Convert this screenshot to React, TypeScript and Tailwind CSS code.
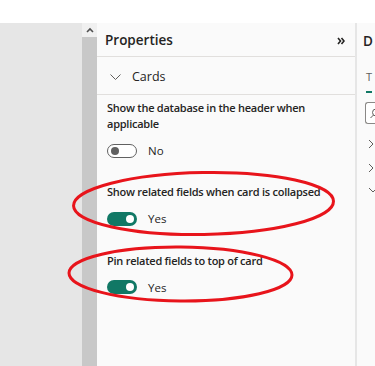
import React from 'react';

const font = { fontFamily: '"Open Sans", "Noto Sans", sans-serif' };

type ToggleRowProps = {
  label: React.ReactNode;
  on: boolean;
};

const Toggle: React.FC<{ on: boolean }> = ({ on }) =>
  on ? (
    <div className="flex h-[14px] w-[30px] items-center justify-end rounded-full bg-[#117865] pr-[3px]">
      <div className="size-[8px] rounded-full bg-white" />
    </div>
  ) : (
    <div className="flex h-[14px] w-[30px] items-center rounded-full border border-[#616161] bg-white pl-[3px]">
      <div className="size-[8px] rounded-full bg-[#616161]" />
    </div>
  );

const ToggleRow: React.FC<ToggleRowProps> = ({ label, on }) => (
  <div className="flex flex-col">
    <div className="text-[11px] font-semibold leading-[16px] tracking-[-0.25px] text-[#252423]">{label}</div>
    <div className="mt-[10px] flex items-center gap-[11px]">
      <Toggle on={on} />
      <span className="text-[11.5px] text-[#252423]">{on ? 'Yes' : 'No'}</span>
    </div>
  </div>
);

export default function App() {
  return (
    <div className="relative flex h-[366px] w-[375px] flex-col overflow-hidden bg-white" style={font}>
      <div className="h-[23px] shrink-0 bg-white shadow-[0_1px_2px_rgba(0,0,0,0.08)]" />

      <div className="flex flex-1">
        {/* canvas */}
        <div className="w-[82px] shrink-0 bg-[#e6e6e6]" />

        {/* scrollbar */}
        <div className="flex w-[15px] shrink-0 flex-col bg-[#f0f0f0]">
          <div className="flex h-[14px] items-center justify-center">
            <svg width="8" height="6" viewBox="0 0 8 6">
              <path d="M1 5 L4 2 L7 5" fill="none" stroke="#505050" strokeWidth="1.6" />
            </svg>
          </div>
          <div className="flex-1 bg-[#c8c8c8]" />
        </div>

        {/* properties pane */}
        <div className="flex w-[260px] shrink-0 flex-col border-r-2 border-[#e6e6e6] bg-[#fafafa]">
          <div className="flex h-[34px] items-center justify-between border-b border-[#e1dfdd] pl-[8px] pr-[10px] pt-[2px]">
            <span className="text-[13.5px] font-semibold text-[#252423]">Properties</span>
            <svg width="8" height="8" viewBox="0 0 8 8">
              <path d="M1 1 L3.5 4 L1 7 M4.5 1 L7 4 L4.5 7" fill="none" stroke="#252423" strokeWidth="1.6" />
            </svg>
          </div>

          <div className="flex h-[38px] items-center gap-[11px] border-b border-[#e1dfdd] pl-[13px] pt-[3px]">
            <svg width="11" height="7" viewBox="0 0 11 7">
              <path d="M0.5 0.5 L5.5 5.5 L10.5 0.5" fill="none" stroke="#605e5c" strokeWidth="1" />
            </svg>
            <span className="text-[12.5px] text-[#252423]">Cards</span>
          </div>

          <div className="flex flex-col gap-[25px] pl-[10px] pr-[12px] pt-[5px]">
            <ToggleRow
              on={false}
              label={
                <>
                  Show the database in the header when
                  <br />
                  applicable
                </>
              }
            />
            <ToggleRow on label="Show related fields when card is collapsed" />
            <ToggleRow on label="Pin related fields to top of card" />
          </div>
        </div>

        {/* next pane, cut off */}
        <div className="flex flex-1 flex-col bg-[#fafafa] pl-[6px]">
          <div className="flex h-[34px] items-center pt-[2px]">
            <span className="text-[13.5px] font-semibold text-[#252423]">D</span>
          </div>
          <div className="mt-[14px] flex flex-col items-start pl-[3px]">
            <span className="text-[11px] leading-[12px] text-[#605e5c]">T</span>
            <div className="mt-[8px] h-[2px] w-[6px] bg-[#117865]" />
          </div>
          <div className="ml-[2px] mt-[9px] flex h-[22px] w-[20px] items-center rounded-l-[3px] border border-r-0 border-[#8a8886] bg-white pl-[4px]">
            <svg width="10" height="10" viewBox="0 0 10 10">
              <circle cx="6" cy="4.5" r="3.5" fill="none" stroke="#605e5c" strokeWidth="1" />
              <path d="M3.5 7 L0.5 10" stroke="#605e5c" strokeWidth="1" />
            </svg>
          </div>
          <div className="mt-[15px] flex flex-col gap-[14px] pl-[5px]">
            <svg width="6" height="10" viewBox="0 0 6 10">
              <path d="M1 1 L5 5 L1 9" fill="none" stroke="#605e5c" strokeWidth="1" />
            </svg>
            <svg width="6" height="10" viewBox="0 0 6 10">
              <path d="M1 1 L5 5 L1 9" fill="none" stroke="#605e5c" strokeWidth="1" />
            </svg>
            <svg width="10" height="6" viewBox="0 0 10 6">
              <path d="M1 1 L5 5 L9 1" fill="none" stroke="#605e5c" strokeWidth="1" />
            </svg>
          </div>
        </div>
      </div>

      {/* hand-drawn annotations */}
      <svg className="pointer-events-none absolute inset-0" width="375" height="366" viewBox="0 0 375 366">
        <ellipse cx="203.5" cy="203.5" rx="130" ry="31" fill="none" stroke="#e8141b" strokeWidth="3" transform="rotate(-1 203 203)" />
        <ellipse cx="180.5" cy="274" rx="111.5" ry="27" fill="none" stroke="#e8141b" strokeWidth="3" transform="rotate(0.5 180 274)" />
      </svg>
    </div>
  );
}
